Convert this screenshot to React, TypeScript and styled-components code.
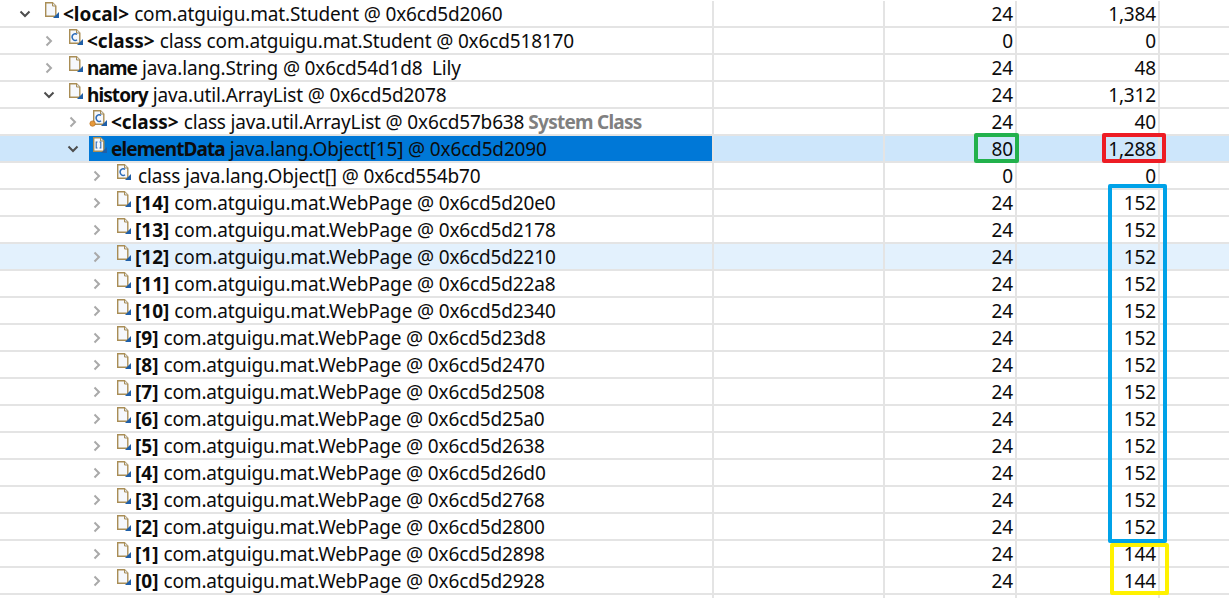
import React from 'react';
import styled, { createGlobalStyle } from 'styled-components';

type IconKind = 'plain' | 'class' | 'system' | 'array';

interface RowData {
	depth: number;
	open?: boolean;
	icon: IconKind;
	name?: string;
	text: string;
	tag?: string;
	shallow: string;
	retained: string;
	tone?: 'selected' | 'hover';
}

const pageRow = (index: number, address: string, retained: string, tone?: 'hover'): RowData => ({
	depth: 3,
	icon: 'plain',
	name: `[${index}]`,
	text: `com.atguigu.mat.WebPage @ ${address}`,
	shallow: '24',
	retained,
	tone,
});

const rows: RowData[] = [
	{ depth: 0, open: true, icon: 'plain', name: '<local>', text: 'com.atguigu.mat.Student @ 0x6cd5d2060', shallow: '24', retained: '1,384' },
	{ depth: 1, icon: 'class', name: '<class>', text: 'class com.atguigu.mat.Student @ 0x6cd518170', shallow: '0', retained: '0' },
	{ depth: 1, icon: 'plain', name: 'name', text: 'java.lang.String @ 0x6cd54d1d8\u00a0\u00a0Lily', shallow: '24', retained: '48' },
	{ depth: 1, open: true, icon: 'plain', name: 'history', text: 'java.util.ArrayList @ 0x6cd5d2078', shallow: '24', retained: '1,312' },
	{ depth: 2, icon: 'system', name: '<class>', text: 'class java.util.ArrayList @ 0x6cd57b638', tag: 'System Class', shallow: '24', retained: '40' },
	{ depth: 2, open: true, icon: 'array', name: 'elementData', text: 'java.lang.Object[15] @ 0x6cd5d2090', shallow: '80', retained: '1,288', tone: 'selected' },
	{ depth: 3, icon: 'class', text: 'class java.lang.Object[] @ 0x6cd554b70', shallow: '0', retained: '0' },
	pageRow(14, '0x6cd5d20e0', '152'),
	pageRow(13, '0x6cd5d2178', '152'),
	pageRow(12, '0x6cd5d2210', '152', 'hover'),
	pageRow(11, '0x6cd5d22a8', '152'),
	pageRow(10, '0x6cd5d2340', '152'),
	pageRow(9, '0x6cd5d23d8', '152'),
	pageRow(8, '0x6cd5d2470', '152'),
	pageRow(7, '0x6cd5d2508', '152'),
	pageRow(6, '0x6cd5d25a0', '152'),
	pageRow(5, '0x6cd5d2638', '152'),
	pageRow(4, '0x6cd5d26d0', '152'),
	pageRow(3, '0x6cd5d2768', '152'),
	pageRow(2, '0x6cd5d2800', '152'),
	pageRow(1, '0x6cd5d2898', '144'),
	pageRow(0, '0x6cd5d2928', '144'),
];

const GlobalStyle = createGlobalStyle`
	html, body {
		margin: 0;
		background: #ffffff;
		overflow: hidden;
	}
	body {
		font-family: "Noto Sans", "Open Sans", sans-serif;
		color: #0c0c0c;
	}
`;

const Table = styled.div`
	position: relative;
	width: 1229px;
	height: 598px;
	padding-top: 1px;
	overflow: hidden;
`;

const Row = styled.div<{ $tone?: string }>`
	display: grid;
	grid-template-columns: 714px 171px 132px 143px 1fr;
	height: 27px;
	background: ${(p) => (p.$tone === 'selected' ? '#cde6fb' : p.$tone === 'hover' ? '#e3f1fd' : 'transparent')};
`;

const Cell = styled.div`
	box-sizing: border-box;
	height: 27px;
	border-right: 2px solid #e4e4e4;
	border-bottom: 2px solid #e4e4e4;
	&:last-child {
		border-right: none;
	}
`;

const NameCell = styled(Cell)<{ $depth: number }>`
	display: flex;
	align-items: center;
	padding-left: ${(p) => 18 + p.$depth * 24}px;
	white-space: nowrap;
	font-size: 19px;
	letter-spacing: -0.15px;
`;

const Twisty = styled.svg`
	flex: none;
	width: 14px;
	height: 14px;
	margin-right: 9px;
`;

const Icon = styled.svg`
	flex: none;
	width: 20px;
	height: 20px;
	margin-top: -5px;
`;

const Label = styled.div<{ $selected?: boolean }>`
	flex: 1;
	display: flex;
	align-items: center;
	align-self: stretch;
	color: #0c0c0c;
	background: ${(p) => (p.$selected ? '#0078d7' : 'transparent')};
`;

const Bold = styled.b<{ $word: boolean }>`
	font-weight: 700;
	letter-spacing: ${(p) => (p.$word ? '-0.9px' : '0')};
	margin-left: 2px;
	margin-right: 5px;
`;

const Plain = styled.span<{ $solo: boolean }>`
	margin-left: ${(p) => (p.$solo ? 5 : 0)}px;
`;

const Tag = styled.b`
	font-weight: 700;
	letter-spacing: -0.75px;
	color: #808080;
	margin-left: 4px;
`;

const NumCell = styled(Cell)`
	font-size: 19px;
	letter-spacing: -0.15px;
	line-height: 27px;
	text-align: right;
	padding-right: 2px;
`;

const Mark = styled.div<{ $color: string; $left: number; $top: number; $w: number; $h: number }>`
	position: absolute;
	box-sizing: border-box;
	left: ${(p) => p.$left}px;
	top: ${(p) => p.$top}px;
	width: ${(p) => p.$w}px;
	height: ${(p) => p.$h}px;
	border: 4px solid ${(p) => p.$color};
	border-radius: 2px;
`;

const TreeTwisty = ({ open }: { open?: boolean }) => (
	<Twisty viewBox="0 0 14 14">
		{open ? (
			<path d="M2.5 4.5 L7 9 L11.5 4.5" fill="none" stroke="#4d4d4d" strokeWidth="2" />
		) : (
			<path d="M4.5 2.5 L9 7 L4.5 11.5" fill="none" stroke="#a9a9a9" strokeWidth="2" />
		)}
	</Twisty>
);

const ObjectIcon = ({ kind }: { kind: IconKind }) => (
	<Icon viewBox="0 0 20 20">
		<path d="M4.7 1.7 H11.5 L14.8 5 V15.3 H4.7 Z" fill="#f6f8fc" stroke="#a98d55" strokeWidth="1.4" />
		<path d="M11.5 1.7 V5 H14.8" fill="#dde6f2" stroke="#a98d55" strokeWidth="1" />
		<path d="M12 17 L18 17 L18 11 Z" fill="#1f5fa8" />
		{kind === 'class' || kind === 'system' ? (
			<path d="M12 6.4 A3 3.4 0 1 0 12 11.8" fill="none" stroke="#2a6ab8" strokeWidth="1.4" />
		) : null}
		{kind === 'array' ? (
			<path d="M8.5 6 H7.2 V12 H8.5 M10.5 6 H11.8 V12 H10.5" fill="none" stroke="#2a6ab8" strokeWidth="1.1" />
		) : null}
		{kind === 'system' ? <circle cx="3.6" cy="14.6" r="2.7" fill="#e69a3c" stroke="#b96f1c" strokeWidth=".7" /> : null}
	</Icon>
);

const App = () => (
	<Table>
		<GlobalStyle />
		{rows.map((row) => (
			<Row key={`${row.depth}-${row.text}`} $tone={row.tone}>
				<NameCell $depth={row.depth}>
					<TreeTwisty open={row.open} />
					<Label $selected={row.tone === 'selected'}>
						<ObjectIcon kind={row.icon} />
						{row.name ? <Bold $word={/^[a-z]/i.test(row.name)}>{row.name}</Bold> : null}
						<Plain $solo={!row.name}>{row.text}</Plain>
						{row.tag ? <Tag>{row.tag}</Tag> : null}
					</Label>
				</NameCell>
				<Cell />
				<NumCell>{row.shallow}</NumCell>
				<NumCell>{row.retained}</NumCell>
				<Cell />
			</Row>
		))}
		<Row>
			<Cell />
			<Cell />
			<Cell />
			<Cell />
			<Cell />
		</Row>
		<Mark $color="#22b14c" $left={974} $top={133} $w={45} $h={30} />
		<Mark $color="#ed1c24" $left={1102} $top={133} $w={64} $h={30} />
		<Mark $color="#00a2e8" $left={1108} $top={184} $w={59} $h={359} />
		<Mark $color="#fff200" $left={1110} $top={543} $w={59} $h={52} />
	</Table>
);

export default App;
